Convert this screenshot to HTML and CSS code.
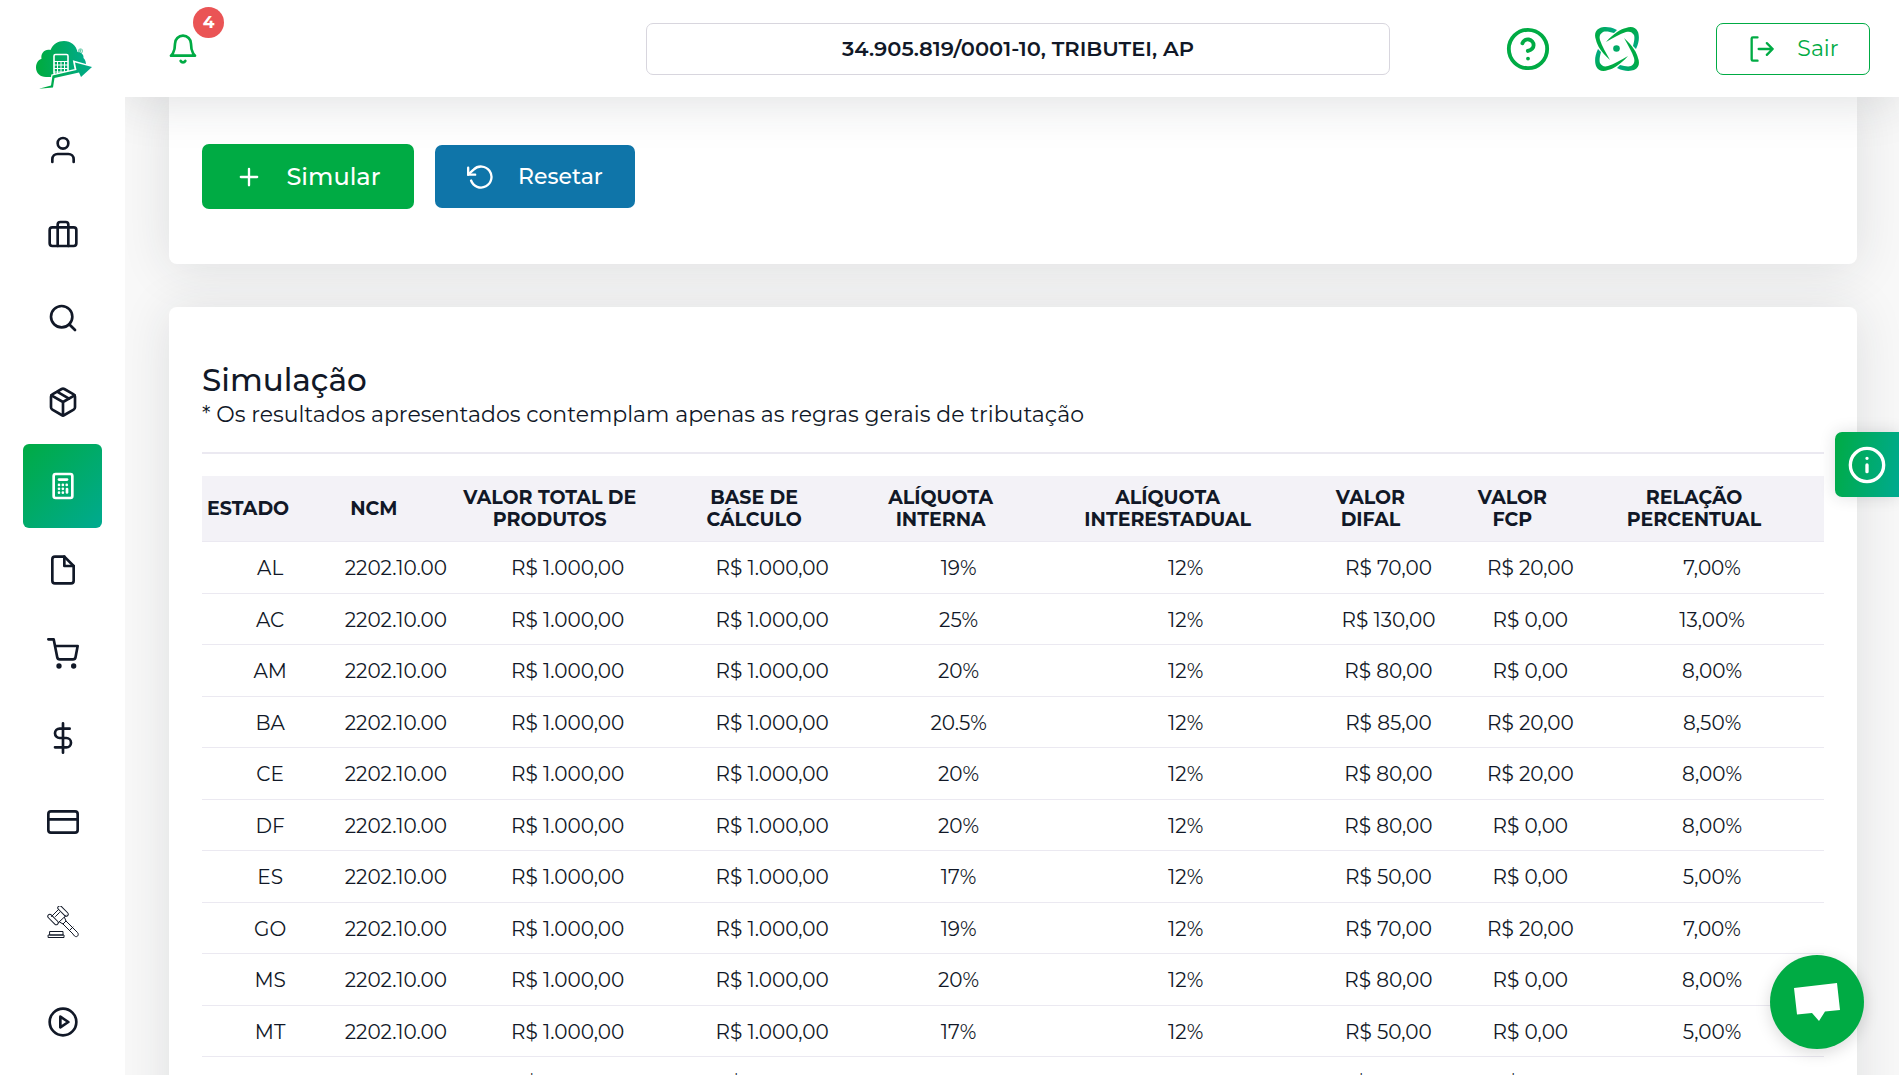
FILE: index.html
```html
<!DOCTYPE html>
<html lang="pt-BR">
<head>
    <meta charset="UTF-8">
    <meta name="viewport" content="width=device-width, initial-scale=1.0">
    <title>Simulação - Tributei</title>
    <link rel="stylesheet" href="styles.css">
</head>
<body>
    <svg class="defs" width="0" height="0" aria-hidden="true">
        <defs>
            <linearGradient id="brand-h" x1="0" y1="0" x2="1" y2="0">
                <stop offset="0.1" stop-color="#00ab44"/>
                <stop offset="1" stop-color="#00aa8c"/>
            </linearGradient>
            <linearGradient id="orbit-fill" x1="0" y1="1" x2="1" y2="0">
                <stop offset="0.4" stop-color="#00ab44"/>
                <stop offset="1" stop-color="#00aa8c"/>
            </linearGradient>
        </defs>
    </svg>

    <nav class="sidebar" aria-label="Menu principal">
        <a class="logo" href="#" aria-label="Tributei">
            <svg width="66" height="58" viewBox="0 0 66 58">
                <path fill="url(#brand-h)" d="M16 41C10 41 6 37 6 31.500c0-5 3-8 5.500-8.800C10.500 17 15 12.500 20.500 14 23 8 28 5 34 5c7 0 12 4 13.500 11 4 0 6.500 3 6 6 2 2 2.500 4 2.500 8L34 38l-12 3z"/>
                <rect x="24" y="18.500" width="14" height="20" rx="1.500" fill="none" stroke="#fff" stroke-width="1.600"/>
                <path fill="none" stroke="#fff" stroke-width="1" d="M24 25.500h14M24 29h14M24 32.500h14M24 36h14M27.500 26v12M31 26v12M34.500 26v12"/>
                <path fill="#fff" stroke="#fff" stroke-width="2.600" d="M21 49.500l1.500-10L46 34l-1.500-8L62 31 51 41l-2.500-4L24.500 42 23 51z"/>
                <path fill="url(#brand-h)" d="M9 52.800l12-3.300L22.500 39.500 46.500 34l-1.500-7.500L62 31 51 41l-2-4.500L24.500 42 23 51.500z"/>
                <circle cx="50.500" cy="15" r="2.200" fill="none" stroke="#00aa70" stroke-width=".5"/>
                <path fill="none" stroke="#00aa70" stroke-width=".5" d="M49.800 16.200v-2.400h1.200v1.200h-1.200M50.500 15l.8 1.200"/>
            </svg>
        </a>
        <a class="item" href="#" aria-label="Usuário"><svg class="icon" viewBox="0 0 24 24"><path d="M20 21v-2a4 4 0 0 0-4-4H8a4 4 0 0 0-4 4v2"/><circle cx="12" cy="7" r="4"/></svg></a>
        <a class="item" href="#" aria-label="Empresas"><svg class="icon" viewBox="0 0 24 24"><rect x="2" y="7" width="20" height="14" rx="2"/><path d="M16 21V5a2 2 0 0 0-2-2h-4a2 2 0 0 0-2 2v16"/></svg></a>
        <a class="item" href="#" aria-label="Buscar"><svg class="icon" viewBox="0 0 24 24"><circle cx="11" cy="11" r="8"/><path d="M21 21l-4.35-4.35"/></svg></a>
        <a class="item" href="#" aria-label="Produtos"><svg class="icon" viewBox="0 0 24 24"><path d="M16.5 9.4l-9-5.19M21 16V8a2 2 0 0 0-1-1.73l-7-4a2 2 0 0 0-2 0l-7 4A2 2 0 0 0 3 8v8a2 2 0 0 0 1 1.73l7 4a2 2 0 0 0 2 0l7-4A2 2 0 0 0 21 16z"/><path d="M3.27 6.96L12 12.01l8.73-5.05M12 22.08V12"/></svg></a>
        <a class="item active" href="#" aria-label="Simulador" aria-current="page">
            <svg class="icon" viewBox="0 0 24 24"><rect x="5" y="3" width="14" height="18" rx="1.5"/><path d="M9 7.200h6"/><path stroke-dasharray="0 2.900" d="M9 11.200h6M9 14.100h3M9 17h3"/><path d="M15 14.300v2.600"/></svg>
        </a>
        <a class="item" href="#" aria-label="Documentos"><svg class="icon" viewBox="0 0 24 24"><path d="M13 2H6a2 2 0 0 0-2 2v16a2 2 0 0 0 2 2h12a2 2 0 0 0 2-2V9z"/><path d="M13 2v7h7"/></svg></a>
        <a class="item" href="#" aria-label="Compras"><svg class="icon" viewBox="0 0 24 24"><circle cx="9" cy="21" r="1"/><circle cx="20" cy="21" r="1"/><path d="M1 1h4l2.680 13.390a2 2 0 0 0 2 1.610h9.720a2 2 0 0 0 2-1.610L23 6H6"/></svg></a>
        <a class="item" href="#" aria-label="Financeiro"><svg class="icon" viewBox="0 0 24 24"><path d="M12 1v22M17 5H9.500a3.500 3.500 0 0 0 0 7h5a3.500 3.500 0 0 1 0 7H6"/></svg></a>
        <a class="item" href="#" aria-label="Pagamentos"><svg class="icon" viewBox="0 0 24 24"><rect x="1" y="4" width="22" height="16" rx="2"/><path d="M1 10h22"/></svg></a>
        <a class="item tall" href="#" aria-label="Legislação">
            <svg class="icon thin" viewBox="0 0 32 32"><path d="M4.500 10.500 11.500 3.500M11.500 16.500 19 9.500"/><rect x="9.500" y="3" width="13" height="4" rx="2" transform="rotate(45 16 5)"/><rect x="-.5" y="11.500" width="13" height="4" rx="2" transform="rotate(45 6 13.500)"/><path d="M12.500 16l3.500 2 3-3-1.500-3.500M16 18l9.500 9.500M19 15l9.500 9.500M22.500 24.500l3.500-3.500M25.500 27.500l2 2.500c2.500 2 5-1 3-3.500l-2-2M8.500 10.500l4-4M3 25.500h13V29H3zM1.500 29H17v2.500H1.500z"/></svg>
        </a>
        <a class="item" href="#" aria-label="Vídeos"><svg class="icon" viewBox="0 0 24 24"><circle cx="12" cy="12" r="10"/><path d="M10 8l6 4-6 4z"/></svg></a>
    </nav>

    <div class="page">
        <header class="topbar">
            <button class="bell" type="button" aria-label="Notificações">
                <svg class="icon" viewBox="0 0 24 24"><path d="M18 8A6 6 0 0 0 6 8c0 7-3 9-3 9h18s-3-2-3-9M13.730 21a2 2 0 0 1-3.460 0"/></svg>
                <span class="badge">4</span>
            </button>
            <input class="company" type="text" value="34.905.819/0001-10, TRIBUTEI, AP" aria-label="Empresa">
            <div class="actions">
                <a class="help" href="#" aria-label="Ajuda"><svg class="icon" viewBox="0 0 24 24"><circle cx="12" cy="12" r="10"/><path d="M9.090 9a3 3 0 0 1 5.830 1c0 2-3 3-3 3M12 17h.01"/></svg></a>
                <a class="orbit" href="#" aria-label="Integrações">
                    <svg width="44" height="44" viewBox="0 0 44 44" fill="url(#orbit-fill)">
                        <path d="M22 3C14-1 8 0 5 1 0 3-1 8 1 13c1 5 5 12 14 20C11 26 7 19 5 13 4 9 5 7 8 5c3-1 7 0 11 1z"/>
                        <path transform="rotate(90 22 22)" d="M22 3C14-1 8 0 5 1 0 3-1 8 1 13c1 5 5 12 14 20C11 26 7 19 5 13 4 9 5 7 8 5c3-1 7 0 11 1z"/>
                        <path transform="rotate(180 22 22)" d="M22 3C14-1 8 0 5 1 0 3-1 8 1 13c1 5 5 12 14 20C11 26 7 19 5 13 4 9 5 7 8 5c3-1 7 0 11 1z"/>
                        <path transform="rotate(270 22 22)" d="M22 3C14-1 8 0 5 1 0 3-1 8 1 13c1 5 5 12 14 20C11 26 7 19 5 13 4 9 5 7 8 5c3-1 7 0 11 1z"/>
                        <circle cx="21.500" cy="21.500" r="3.300" fill="#00aa66"/>
                    </svg>
                </a>
                <button class="logout" type="button">
                    <svg class="icon" viewBox="0 0 24 24"><path d="M9 22H5a1 1 0 0 1-1-1V3a1 1 0 0 1 1-1h4M17 17l5-5-5-5M22 12H10"/></svg>
                    Sair
                </button>
            </div>
        </header>

        <main class="content">
            <section class="card form-card">
                <button class="btn btn-primary" type="button">
                    <svg class="icon" viewBox="0 0 24 24"><path d="M12 5v14M5 12h14"/></svg>
                    Simular
                </button>
                <button class="btn btn-info" type="button">
                    <svg class="icon" viewBox="0 0 24 24"><path d="M1 4v6h6"/><path d="M3.510 15a9 9 0 1 0 2.130-9.360L1 10"/></svg>
                    Resetar
                </button>
            </section>

            <section class="card">
                <h1>Simulação</h1>
                <p class="note">* Os resultados apresentados contemplam apenas as regras gerais de tributação</p>
                <hr>
                <table>
                    <colgroup>
                        <col class="c-uf"><col class="c-ncm"><col class="c-total"><col class="c-base"><col class="c-int"><col class="c-inter"><col class="c-difal"><col class="c-fcp"><col class="c-rel">
                    </colgroup>
                    <thead>
                        <tr>
                            <th class="short">Estado</th>
                            <th class="short">NCM</th>
                            <th>Valor total de<br>produtos</th>
                            <th>Base de<br>cálculo</th>
                            <th>Alíquota<br>interna</th>
                            <th>Alíquota<br>interestadual</th>
                            <th>Valor<br>DIFAL</th>
                            <th>Valor<br>FCP</th>
                            <th>Relação<br>percentual</th>
                        </tr>
                    </thead>
                    <tbody>
                        <tr><td>AL</td><td>2202.10.00</td><td>R$ 1.000,00</td><td>R$ 1.000,00</td><td>19%</td><td>12%</td><td>R$ 70,00</td><td>R$ 20,00</td><td>7,00%</td></tr>
                        <tr><td>AC</td><td>2202.10.00</td><td>R$ 1.000,00</td><td>R$ 1.000,00</td><td>25%</td><td>12%</td><td>R$ 130,00</td><td>R$ 0,00</td><td>13,00%</td></tr>
                        <tr><td>AM</td><td>2202.10.00</td><td>R$ 1.000,00</td><td>R$ 1.000,00</td><td>20%</td><td>12%</td><td>R$ 80,00</td><td>R$ 0,00</td><td>8,00%</td></tr>
                        <tr><td>BA</td><td>2202.10.00</td><td>R$ 1.000,00</td><td>R$ 1.000,00</td><td>20.5%</td><td>12%</td><td>R$ 85,00</td><td>R$ 20,00</td><td>8,50%</td></tr>
                        <tr><td>CE</td><td>2202.10.00</td><td>R$ 1.000,00</td><td>R$ 1.000,00</td><td>20%</td><td>12%</td><td>R$ 80,00</td><td>R$ 20,00</td><td>8,00%</td></tr>
                        <tr><td>DF</td><td>2202.10.00</td><td>R$ 1.000,00</td><td>R$ 1.000,00</td><td>20%</td><td>12%</td><td>R$ 80,00</td><td>R$ 0,00</td><td>8,00%</td></tr>
                        <tr><td>ES</td><td>2202.10.00</td><td>R$ 1.000,00</td><td>R$ 1.000,00</td><td>17%</td><td>12%</td><td>R$ 50,00</td><td>R$ 0,00</td><td>5,00%</td></tr>
                        <tr><td>GO</td><td>2202.10.00</td><td>R$ 1.000,00</td><td>R$ 1.000,00</td><td>19%</td><td>12%</td><td>R$ 70,00</td><td>R$ 20,00</td><td>7,00%</td></tr>
                        <tr><td>MS</td><td>2202.10.00</td><td>R$ 1.000,00</td><td>R$ 1.000,00</td><td>20%</td><td>12%</td><td>R$ 80,00</td><td>R$ 0,00</td><td>8,00%</td></tr>
                        <tr><td>MT</td><td>2202.10.00</td><td>R$ 1.000,00</td><td>R$ 1.000,00</td><td>17%</td><td>12%</td><td>R$ 50,00</td><td>R$ 0,00</td><td>5,00%</td></tr>
                        <tr><td>MA</td><td>2202.10.00</td><td>R$ 1.000,00</td><td>R$ 1.000,00</td><td>22%</td><td>12%</td><td>R$ 100,00</td><td>R$ 0,00</td><td>10,00%</td></tr>
                    </tbody>
                </table>
            </section>
        </main>
    </div>

    <button class="info-tab" type="button" aria-label="Informações">
        <svg class="icon" viewBox="0 0 24 24"><circle cx="12" cy="12" r="10"/><path d="M12 16v-4M12 8h.01"/></svg>
    </button>
    <button class="chat" type="button" aria-label="Chat">
        <svg width="46" height="40" viewBox="0 0 46 40"><path fill="#fff" d="M0 6L43 1l3 27-15 1.500L25 39l-7-8-15 1.500z"/></svg>
    </button>
</body>
</html>
```

FILE: styles.css
```css
* {
    box-sizing: border-box;
}
body {
    margin: 0;
    height: 100vh;
    overflow: hidden;
    display: flex;
    background: #f8f8f8;
    color: #111827;
    font-family: Montserrat, Inter, sans-serif;
    font-size: 20px;
}
button, input {
    font: inherit;
    cursor: pointer;
}
.defs {
    position: absolute;
}
.icon {
    width: 32px;
    height: 32px;
    flex: none;
    fill: none;
    stroke: currentColor;
    stroke-width: 2;
    stroke-linecap: round;
    stroke-linejoin: round;
}

/* sidebar */
.sidebar {
    width: 125px;
    flex: none;
    display: flex;
    flex-direction: column;
    align-items: center;
    background: #fff;
    z-index: 3;
}
.logo {
    height: 108px;
    padding-top: 36px;
}
.item {
    width: 79px;
    height: 84px;
    flex: none;
    display: flex;
    align-items: center;
    justify-content: center;
    color: #111827;
    border-radius: 6px;
}
.item.active {
    color: #fff;
    background: linear-gradient(135deg, #00ab44, #00aa90);
}
.item.tall {
    height: 116px;
}
.thin {
    stroke-width: 1;
}

/* top bar */
.page {
    flex: 1;
    min-width: 0;
}
.topbar {
    position: relative;
    z-index: 2;
    height: 97px;
    padding: 0 29px 0 41px;
    display: grid;
    grid-template-columns: 1fr 744px 1fr;
    align-items: center;
    background: #fff;
    box-shadow: 0 4px 50px rgba(34, 41, 47, 0.15);
}
.bell {
    position: relative;
    width: 34px;
    height: 32px;
    padding: 0;
    border: 0;
    background: none;
    color: #00ab44;
}
.badge {
    position: absolute;
    left: 27px;
    top: -26px;
    width: 31px;
    height: 31px;
    border-radius: 50%;
    background: #ea5455;
    color: #fff;
    font-size: 17px;
    font-weight: 700;
    line-height: 31px;
    text-align: center;
}
.company {
    width: 100%;
    height: 52px;
    border: 1px solid #d8d6de;
    border-radius: 7px;
    background: #fff;
    color: #111827;
    font-size: 21px;
    font-weight: 600;
    text-align: center;
}
.actions {
    display: flex;
    align-items: center;
    justify-content: flex-end;
}
.help, .orbit {
    display: flex;
    color: #00ab44;
}
.help {
    margin-right: 44px;
}
.help .icon {
    width: 46px;
    height: 46px;
}
.orbit {
    margin-right: 77px;
}
.logout {
    width: 154px;
    height: 52px;
    display: flex;
    align-items: center;
    justify-content: center;
    gap: 22px;
    border: 1px solid #00ab44;
    border-radius: 7px;
    background: #fff;
    color: #00ab44;
    font-size: 22px;
}
.logout .icon {
    width: 28px;
    height: 28px;
}

/* content */
.content {
    padding: 0 42px 0 44px;
}
.card {
    margin-bottom: 43px;
    padding: 54px 33px;
    border-radius: 8px;
    background: #fff;
    box-shadow: 0 4px 50px rgba(34, 41, 47, 0.12);
}
.form-card {
    display: flex;
    align-items: center;
    gap: 21px;
    padding: 47px 33px 55px;
    border-radius: 0 0 8px 8px;
}
.btn {
    display: flex;
    align-items: center;
    justify-content: center;
    gap: 23px;
    border: 0;
    border-radius: 7px;
    color: #fff;
    font-weight: 500;
}
.btn-primary {
    width: 212px;
    height: 65px;
    background: #00ab44;
    font-size: 24px;
}
.btn-info {
    width: 200px;
    height: 63px;
    background: #0f75a9;
    font-size: 22px;
}
.btn .icon {
    width: 28px;
    height: 28px;
}
h1 {
    margin: 0;
    font-size: 31px;
    font-weight: 500;
    line-height: 38px;
}
.note {
    margin: 0;
    font-size: 22px;
    font-weight: 400;
    line-height: 32px;
}
hr {
    height: 2px;
    margin: 21px 0 22px;
    border: 0;
    background: #ebe9f1;
}
table {
    width: 100%;
    table-layout: fixed;
    border-collapse: collapse;
}
.c-uf { width: 8.4%; }
.c-ncm { width: 7.1%; }
.c-total { width: 14.1%; }
.c-base { width: 11.1%; }
.c-int { width: 11.9%; }
.c-inter { width: 16.1%; }
.c-difal { width: 8.9%; }
.c-fcp { width: 8.6%; }
.c-rel { width: 13.8%; }
th {
    height: 65px;
    padding: 2px 40px 0 4px;
    border-bottom: 1px solid #ebe9f1;
    background: #f3f2f7;
    font-size: 19px;
    font-weight: 700;
    line-height: 22px;
    text-transform: uppercase;
    white-space: nowrap;
}
th.short {
    padding-right: 48px;
}
td {
    height: 51px;
    padding: 2px 0 0;
    border-bottom: 1px solid #ebe9f1;
    font-weight: 400;
    text-align: center;
    white-space: nowrap;
}
tr:nth-child(odd) td {
    height: 52px;
}

/* floating buttons */
.info-tab {
    position: fixed;
    right: 0;
    top: 432px;
    z-index: 4;
    width: 64px;
    height: 65px;
    padding: 0;
    border: 0;
    border-radius: 7px 0 0 7px;
    background: linear-gradient(100deg, #00ab44, #00aa90);
    color: #fff;
    box-shadow: 0 0 16px rgba(34, 41, 47, 0.15);
}
.info-tab .icon {
    display: block;
    width: 40px;
    height: 40px;
    margin: 0 auto;
}
.chat {
    position: fixed;
    right: 35px;
    bottom: 26px;
    z-index: 4;
    width: 94px;
    height: 94px;
    display: flex;
    align-items: center;
    justify-content: center;
    padding: 0;
    border: 0;
    border-radius: 50%;
    background: #00ab44;
    box-shadow: 0 4px 16px rgba(0, 0, 0, 0.15);
}
```
